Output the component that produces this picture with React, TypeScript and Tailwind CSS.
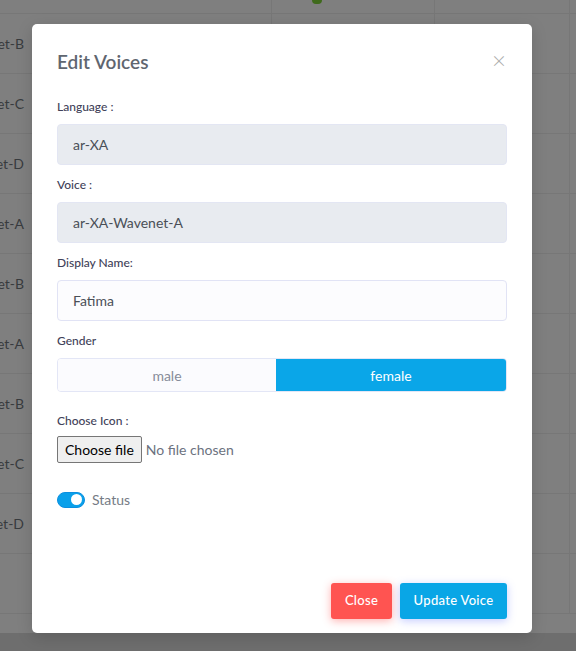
import React from "react";

const rows = ["et-B", "et-C", "et-D", "et-A", "et-B", "et-A", "et-B", "et-C", "et-D", ""];

function Field({ label, value, disabled }: { label: string; value: string; disabled?: boolean }) {
  return (
    <div className="flex flex-col">
      <label className="text-[12px] leading-[18px] font-medium text-[#3f4259] mb-[8px]">{label}</label>
      <div
        className={
          disabled
            ? "h-[41px] rounded-[4px] border border-[#e3e6f3] bg-[#e8ebf0] px-[15px] flex items-center text-[14px] text-[#4a4f57]"
            : "h-[41px] rounded-[4px] border border-[#e1e3f5] bg-[#fcfcfe] px-[15px] flex items-center text-[14px] text-[#4a4f57]"
        }
      >
        {value}
      </div>
    </div>
  );
}

export default function App() {
  return (
    <div className="relative w-[576px] h-[651px] overflow-hidden bg-[#7f7f7f] font-['Lato','Noto_Sans',sans-serif]">
      {/* background table */}
      <div className="flex flex-col">
        <div className="h-[14px] border-b border-[#777777] flex">
          <div className="w-[272px] border-r border-[#777777]" />
          <div className="w-[163px] border-r border-[#777777] flex justify-start pl-[40px]">
            <div className="w-[10px] h-[4px] rounded-b-full bg-[#3f6a1c]" />
          </div>
          <div className="w-[135px] border-r border-[#777777]" />
        </div>
        {rows.map((r, i) => (
          <div key={i} className="h-[60px] border-b border-[#777777] flex">
            <div className="w-[272px] border-r border-[#777777] flex">
              <div className="w-[24px] flex justify-end items-center whitespace-nowrap text-[14px] text-[#383b3e]">
                {r}
              </div>
            </div>
            <div className="w-[163px] border-r border-[#777777]" />
            <div className="w-[135px] border-r border-[#777777]" />
          </div>
        ))}
      </div>
      <div className="absolute left-0 right-0 bottom-0 h-[18px] bg-[#6e6e6e]" />

      {/* modal */}
      <div className="absolute left-[32px] top-[24px] w-[500px] h-[609px] rounded-[5px] bg-white shadow-[0_4px_16px_rgba(0,0,0,0.15)] flex flex-col px-[25px] pt-[25px] pb-[14px]">
        <div className="flex items-start justify-between h-[26px]">
          <h2 className="text-[19px] leading-[26px] font-semibold text-[#5f6670]">Edit Voices</h2>
          <span className="text-[#ababab] text-[24px] leading-[24px] -mt-[1px] mr-[1px] font-light">×</span>
        </div>

        <div className="flex flex-col gap-[11px] mt-[23px]">
          <Field label="Language :" value="ar-XA" disabled />
          <Field label="Voice :" value="ar-XA-Wavenet-A" disabled />
          <Field label="Display Name:" value="Fatima" />
          <div className="flex flex-col">
            <label className="text-[12px] leading-[18px] font-medium text-[#3f4259] mb-[8px]">Gender</label>
            <div className="flex h-[34px] rounded-[4px] overflow-hidden border border-[#e3e6f6]">
              <div className="flex-auto flex items-center justify-center bg-[#fbfbfe] text-[14px] text-[#868b99]">male</div>
              <div className="flex-auto flex items-center justify-center bg-[#0aa6e8] text-[14px] text-white">female</div>
            </div>
          </div>
          <div className="flex flex-col mt-[9px]">
            <label className="text-[12px] leading-[18px] font-medium text-[#3f4259] mb-[6px]">Choose Icon :</label>
            <div className="flex items-center gap-[4px]">
              <div className="h-[27px] px-[7px] flex items-center rounded-[2px] border border-[#767676] bg-[#efefef] text-[14px] text-black">
                Choose file
              </div>
              <span className="text-[14px] text-[#6c7280]">No file chosen</span>
            </div>
          </div>
        </div>

        <div className="flex items-center gap-[7px] mt-[26px]">
          <div className="w-[28px] h-[16px] rounded-full bg-[#0aa0ea] border border-[#0b8fe0] flex items-center justify-end pr-[2px]">
            <div className="w-[11px] h-[11px] rounded-full bg-white" />
          </div>
          <span className="text-[14px] text-[#757b85]">Status</span>
        </div>

        <div className="mt-auto flex justify-end gap-[8px]">
          <button className="h-[36px] w-[61px] rounded-[3px] bg-[#ff5451] text-white text-[13px] font-medium tracking-[0.3px] shadow-[0_2px_8px_rgba(255,84,81,0.45)]">
            Close
          </button>
          <button className="h-[36px] w-[107px] rounded-[3px] bg-[#09a6e6] text-white text-[13px] font-medium tracking-[0.3px] shadow-[0_2px_8px_rgba(90,110,255,0.35)]">
            Update Voice
          </button>
        </div>
      </div>
    </div>
  );
}
